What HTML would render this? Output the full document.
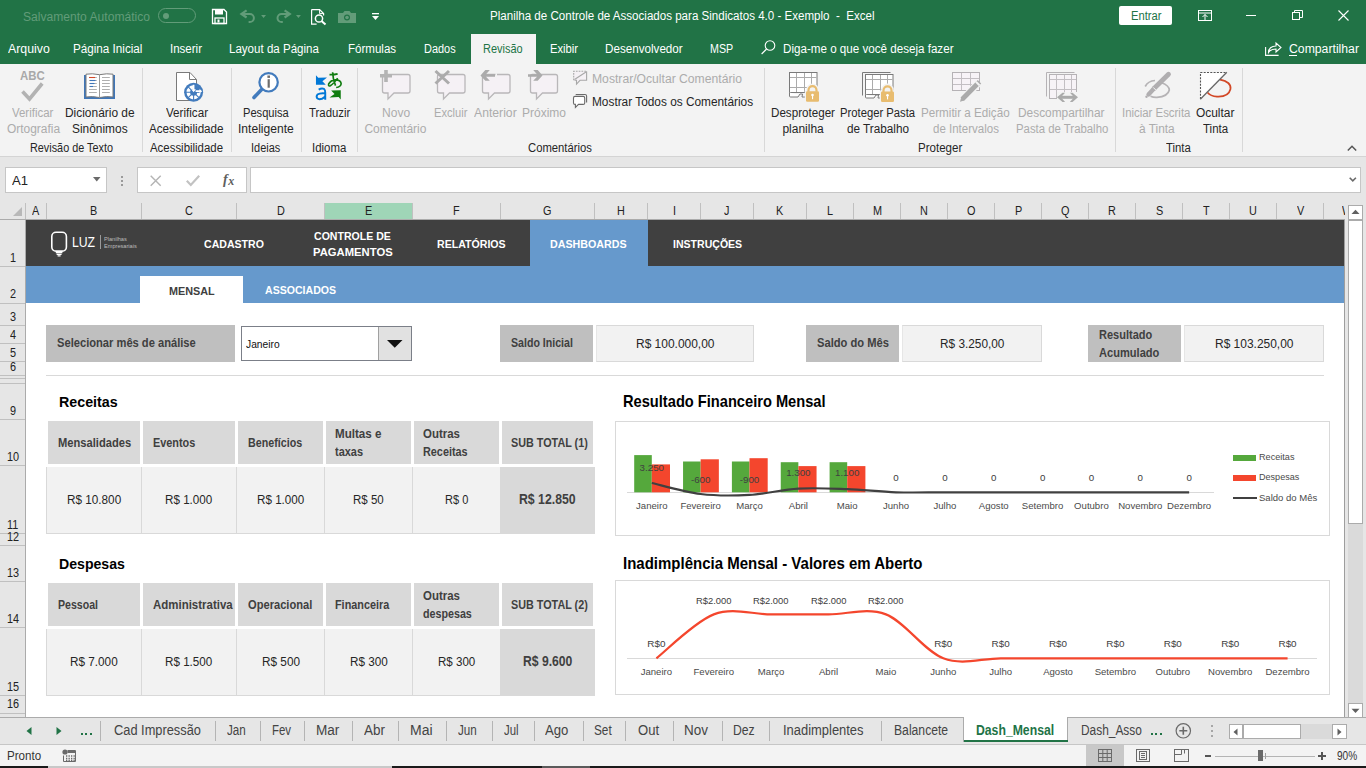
<!DOCTYPE html>
<html><head><meta charset="utf-8"><style>
html,body{margin:0;padding:0;width:1366px;height:768px;overflow:hidden;background:#ffffff;}
body{position:relative;font-family:"Liberation Sans",sans-serif;}
div{position:absolute;}
.t{white-space:nowrap;line-height:1;transform-origin:0 0;}
svg{overflow:visible;}
</style></head><body>
<div style="left:0px;top:0px;width:1366px;height:64px;background:#217346;"></div>
<div class="t" style="left:23.40px;top:11.00px;font-size:12.00px;color:#629c79;transform:scaleX(1.0073);">Salvamento Automático</div>
<div style="left:158px;top:8px;width:38px;height:15px;background:transparent;border:1px solid #629c79;border-radius:8px;box-sizing:border-box;"></div>
<div style="left:163px;top:13px;width:6px;height:6px;background:#629c79;border-radius:50%;"></div>
<div class="t" style="left:490.20px;top:10.00px;font-size:12.00px;color:#ffffff;transform:scaleX(0.9639);white-space:pre;">Planilha de Controle de Associados para Sindicatos 4.0 - Exemplo  -  Excel</div>
<div style="left:1119px;top:6px;width:53px;height:19px;background:#ffffff;border-radius:2px;"></div>
<div class="t" style="left:1130.60px;top:10.00px;font-size:12.00px;color:#217346;transform:scaleX(0.9303);">Entrar</div>
<svg style="position:absolute;left:212px;top:9px;" width="15" height="15" viewBox="0 0 15 15"><path d="M0.5 0.5h11.5l2.5 2.5v11.5h-14z" fill="none" stroke="#ffffff" stroke-width="1.3"/><rect x="3" y="0.5" width="8" height="5" fill="#ffffff"/><rect x="3" y="9" width="9" height="5.5" fill="none" stroke="#ffffff" stroke-width="1.3"/><rect x="5.5" y="10.5" width="2" height="3" fill="#ffffff"/></svg>
<svg style="position:absolute;left:236px;top:6px;" width="70" height="22" viewBox="0 0 70 22"><path d="M5.6 7.9H13.8A4.1 4.1 0 0 1 13.8 16.1H12.6" fill="none" stroke="#629c79" stroke-width="2"/><path d="M10.6 4.3L5.4 7.9L10.6 11.5" fill="none" stroke="#629c79" stroke-width="2.2"/><path d="M25.1 9.1h4.9l-2.45 2.9z" fill="#629c79"/><path d="M53.6 7.9H45.6A4.1 4.1 0 0 0 45.6 16.1H46.8" fill="none" stroke="#629c79" stroke-width="2"/><path d="M48.6 4.3L53.8 7.9L48.6 11.5" fill="none" stroke="#629c79" stroke-width="2.2"/><path d="M60 9.1h4.9l-2.45 2.9z" fill="#629c79"/></svg>
<svg style="position:absolute;left:311px;top:9px;" width="16" height="16" viewBox="0 0 16 16"><path d="M0.6 0.6h8l4 4v2M0.6 0.6v14.5h5" fill="none" stroke="#ffffff" stroke-width="1.2"/><path d="M8.6 0.6v4h4" fill="none" stroke="#ffffff" stroke-width="1"/><circle cx="8" cy="9.5" r="3.6" fill="none" stroke="#ffffff" stroke-width="1.5"/><path d="M10.5 12l4 3.5" stroke="#ffffff" stroke-width="2"/></svg>
<svg style="position:absolute;left:338px;top:11px;" width="18" height="12" viewBox="0 0 18 12"><path d="M0 2h5l1.5-2h5l1.5 2h5v10h-18z" fill="#629c79"/><circle cx="9" cy="6.5" r="3" fill="#217346"/><circle cx="9" cy="6.5" r="1.8" fill="#629c79"/></svg>
<svg style="position:absolute;left:372px;top:13px;" width="7" height="8" viewBox="0 0 7 8"><rect x="0" y="0" width="7" height="1.3" fill="#ffffff"/><path d="M0 3h7l-3.5 4z" fill="#ffffff"/></svg>
<svg style="position:absolute;left:1198px;top:10px;" width="14" height="11" viewBox="0 0 14 11"><rect x="0.5" y="0.5" width="13" height="10" fill="none" stroke="#ffffff" stroke-width="1"/><path d="M0.5 3h13" stroke="#ffffff"/><path d="M7 10V4.5M4.5 7l2.5-2.5 2.5 2.5" fill="none" stroke="#ffffff"/></svg>
<div style="left:1246px;top:15px;width:10px;height:1px;background:#ffffff;"></div>
<svg style="position:absolute;left:1292px;top:10px;" width="11" height="10" viewBox="0 0 11 10"><rect x="0.5" y="2.5" width="7" height="7" fill="none" stroke="#ffffff"/><path d="M2.5 2.5V0.5h8v7h-3" fill="none" stroke="#ffffff"/></svg>
<svg style="position:absolute;left:1338px;top:10px;" width="11" height="11" viewBox="0 0 11 11"><path d="M0.5 0.5l10 10M10.5 0.5l-10 10" stroke="#ffffff" stroke-width="1.1"/></svg>
<div class="t" style="left:8.00px;top:43.00px;font-size:12.00px;color:#ffffff;transform:scaleX(1.0273);">Arquivo</div>
<div class="t" style="left:73.40px;top:43.00px;font-size:12.00px;color:#ffffff;transform:scaleX(0.9722);">Página Inicial</div>
<div class="t" style="left:170.00px;top:43.00px;font-size:12.00px;color:#ffffff;transform:scaleX(0.9598);">Inserir</div>
<div class="t" style="left:229.30px;top:43.00px;font-size:12.00px;color:#ffffff;transform:scaleX(0.9624);">Layout da Página</div>
<div class="t" style="left:347.50px;top:43.00px;font-size:12.00px;color:#ffffff;transform:scaleX(0.9618);">Fórmulas</div>
<div class="t" style="left:423.60px;top:43.00px;font-size:12.00px;color:#ffffff;transform:scaleX(0.9110);">Dados</div>
<div style="left:471px;top:34px;width:65px;height:30px;background:#f3f3f3;"></div>
<div class="t" style="left:483.00px;top:43.00px;font-size:12.00px;color:#217346;transform:scaleX(0.9134);">Revisão</div>
<div class="t" style="left:550.00px;top:43.00px;font-size:12.00px;color:#ffffff;transform:scaleX(0.9331);">Exibir</div>
<div class="t" style="left:605.20px;top:43.00px;font-size:12.00px;color:#ffffff;transform:scaleX(0.9707);">Desenvolvedor</div>
<div class="t" style="left:710.30px;top:43.00px;font-size:12.00px;color:#ffffff;transform:scaleX(0.8921);">MSP</div>
<svg style="position:absolute;left:761px;top:40px;" width="15" height="15" viewBox="0 0 15 15"><circle cx="9" cy="5.5" r="4.8" fill="none" stroke="#ffffff" stroke-width="1.1"/><path d="M5.6 9L0.6 14" stroke="#ffffff" stroke-width="1.2"/></svg>
<div class="t" style="left:783.40px;top:43.00px;font-size:12.00px;color:#ffffff;transform:scaleX(0.9682);">Diga-me o que você deseja fazer</div>
<svg style="position:absolute;left:1265px;top:41px;" width="17" height="15" viewBox="0 0 17 15"><path d="M0.6 6v8.4h13" fill="none" stroke="#ffffff" stroke-width="1.1"/><path d="M3.5 11.5c0-4 3-6.5 7.5-6.5V2l5 4.5-5 4.5V8c-3.5 0-6 1-7.5 3.5z" fill="none" stroke="#ffffff" stroke-width="1.1"/></svg>
<div class="t" style="left:1289.00px;top:43.00px;font-size:12.00px;color:#ffffff;transform:scaleX(1.0190);">Compartilhar</div>
<div style="left:1289px;top:55px;width:8px;height:1px;background:#ffffff;"></div>
<div style="left:0px;top:64px;width:1366px;height:92px;background:#f3f3f3;"></div>
<div style="left:0px;top:156px;width:1366px;height:1px;background:#d4d4d4;"></div>
<div style="left:142px;top:68px;width:1px;height:84px;background:#d8d8d8;"></div>
<div style="left:231px;top:68px;width:1px;height:84px;background:#d8d8d8;"></div>
<div style="left:301px;top:68px;width:1px;height:84px;background:#d8d8d8;"></div>
<div style="left:357px;top:68px;width:1px;height:84px;background:#d8d8d8;"></div>
<div style="left:764px;top:68px;width:1px;height:84px;background:#d8d8d8;"></div>
<div style="left:1115px;top:68px;width:1px;height:84px;background:#d8d8d8;"></div>
<div style="left:1242px;top:68px;width:1px;height:84px;background:#d8d8d8;"></div>
<div class="t" style="left:29.50px;top:142.00px;font-size:12.00px;color:#262626;transform:scaleX(0.9038);">Revisão de Texto</div>
<div class="t" style="left:150.00px;top:142.00px;font-size:12.00px;color:#262626;transform:scaleX(0.9516);">Acessibilidade</div>
<div class="t" style="left:251.40px;top:142.00px;font-size:12.00px;color:#262626;transform:scaleX(0.9119);">Ideias</div>
<div class="t" style="left:312.20px;top:142.00px;font-size:12.00px;color:#262626;transform:scaleX(0.9523);">Idioma</div>
<div class="t" style="left:528.40px;top:142.00px;font-size:12.00px;color:#262626;transform:scaleX(0.9393);">Comentários</div>
<div class="t" style="left:918.10px;top:142.00px;font-size:12.00px;color:#262626;transform:scaleX(0.9625);">Proteger</div>
<div class="t" style="left:1165.80px;top:142.00px;font-size:12.00px;color:#262626;transform:scaleX(0.9454);">Tinta</div>
<svg style="position:absolute;left:1347px;top:145px;" width="10" height="6" viewBox="0 0 10 6"><path d="M0.8 5.5L5 1.3l4.2 4.2" fill="none" stroke="#555" stroke-width="1.5"/></svg>
<div class="t" style="left:12.30px;top:107.00px;font-size:12.00px;color:#acacac;transform:scaleX(0.9527);">Verificar</div>
<div class="t" style="left:6.70px;top:123.00px;font-size:12.00px;color:#acacac;transform:scaleX(0.9952);">Ortografia</div>
<div class="t" style="left:65.40px;top:107.00px;font-size:12.00px;color:#262626;transform:scaleX(0.9937);">Dicionário de</div>
<div class="t" style="left:72.40px;top:123.00px;font-size:12.00px;color:#262626;transform:scaleX(0.9923);">Sinônimos</div>
<div class="t" style="left:166.00px;top:107.00px;font-size:12.00px;color:#262626;transform:scaleX(0.9689);">Verificar</div>
<div class="t" style="left:149.40px;top:123.00px;font-size:12.00px;color:#262626;transform:scaleX(0.9724);">Acessibilidade</div>
<div class="t" style="left:243.20px;top:107.00px;font-size:12.00px;color:#262626;transform:scaleX(0.9257);">Pesquisa</div>
<div class="t" style="left:238.40px;top:123.00px;font-size:12.00px;color:#262626;transform:scaleX(1.0058);">Inteligente</div>
<div class="t" style="left:308.70px;top:107.00px;font-size:12.00px;color:#262626;transform:scaleX(0.9480);">Traduzir</div>
<div class="t" style="left:381.50px;top:107.00px;font-size:12.00px;color:#acacac;transform:scaleX(1.0031);">Novo</div>
<div class="t" style="left:364.40px;top:123.00px;font-size:12.00px;color:#acacac;">Comentário</div>
<div class="t" style="left:434.20px;top:107.00px;font-size:12.00px;color:#acacac;transform:scaleX(0.9276);">Excluir</div>
<div class="t" style="left:474.00px;top:107.00px;font-size:12.00px;color:#acacac;transform:scaleX(1.0162);">Anterior</div>
<div class="t" style="left:522.00px;top:107.00px;font-size:12.00px;color:#acacac;">Próximo</div>
<div class="t" style="left:591.60px;top:73.00px;font-size:12.00px;color:#acacac;transform:scaleX(1.0125);">Mostrar/Ocultar Comentário</div>
<div class="t" style="left:591.60px;top:96.00px;font-size:12.00px;color:#262626;transform:scaleX(0.9872);">Mostrar Todos os Comentários</div>
<div class="t" style="left:771.00px;top:107.00px;font-size:12.00px;color:#262626;transform:scaleX(0.9691);">Desproteger</div>
<div class="t" style="left:782.40px;top:123.00px;font-size:12.00px;color:#262626;">planilha</div>
<div class="t" style="left:840.40px;top:107.00px;font-size:12.00px;color:#262626;transform:scaleX(0.9382);">Proteger Pasta</div>
<div class="t" style="left:847.00px;top:123.00px;font-size:12.00px;color:#262626;transform:scaleX(0.9782);">de Trabalho</div>
<div class="t" style="left:921.30px;top:107.00px;font-size:12.00px;color:#acacac;transform:scaleX(0.9697);">Permitir a Edição</div>
<div class="t" style="left:932.60px;top:123.00px;font-size:12.00px;color:#acacac;transform:scaleX(0.9591);">de Intervalos</div>
<div class="t" style="left:1018.30px;top:107.00px;font-size:12.00px;color:#acacac;transform:scaleX(0.9901);">Descompartilhar</div>
<div class="t" style="left:1015.70px;top:123.00px;font-size:12.00px;color:#acacac;transform:scaleX(0.9476);">Pasta de Trabalho</div>
<div class="t" style="left:1122.20px;top:107.00px;font-size:12.00px;color:#acacac;transform:scaleX(0.9497);">Iniciar Escrita</div>
<div class="t" style="left:1139.00px;top:123.00px;font-size:12.00px;color:#acacac;transform:scaleX(0.9910);">à Tinta</div>
<div class="t" style="left:1196.20px;top:107.00px;font-size:12.00px;color:#262626;transform:scaleX(0.9928);">Ocultar</div>
<div class="t" style="left:1203.30px;top:123.00px;font-size:12.00px;color:#262626;transform:scaleX(0.9568);">Tinta</div>
<div class="t" style="left:20.40px;top:69.00px;font-size:13.23px;color:#a8a8a8;font-weight:bold;transform:scaleX(0.8619);">ABC</div>
<svg style="position:absolute;left:15px;top:66px;" width="40" height="40" viewBox="0 0 40 40"><path d="M7.5 25.5L14.5 33L27.2 17.5" fill="none" stroke="#b2b2b2" stroke-width="3.6" stroke-linejoin="miter"/></svg>
<svg style="position:absolute;left:84px;top:73px;" width="31" height="27" viewBox="0 0 31 27"><rect x="0" y="2" width="31" height="24" fill="#3f76b8"/><path d="M2 1.2Q8 0.2 15.5 1.7Q23 0.2 29 1.2V24Q23 23 15.5 24.5Q8 23 2 24z" fill="#ffffff" stroke="#7a7a7a" stroke-width="1"/><path d="M15.5 1.7V24.5" stroke="#9a9a9a" stroke-width="1"/><path d="M5 4.5h7.8M18 4.5h7.8" stroke="#a6a6a6" stroke-width="0.9"/><path d="M5 7.5h7.8M18 7.5h7.8" stroke="#a6a6a6" stroke-width="0.9"/><path d="M5 10.5h7.8M18 10.5h7.8" stroke="#a6a6a6" stroke-width="0.9"/><path d="M5 13.5h7.8M18 13.5h7.8" stroke="#a6a6a6" stroke-width="0.9"/><path d="M5 16.5h7.8M18 16.5h7.8" stroke="#a6a6a6" stroke-width="0.9"/><path d="M5 19.5h7.8M18 19.5h7.8" stroke="#a6a6a6" stroke-width="0.9"/><path d="M5 4.5h6" stroke="#d24726" stroke-width="1.1"/><path d="M6 7.5h5.5" stroke="#3f76b8" stroke-width="1.1"/><path d="M6 10.5h4.5" stroke="#3f76b8" stroke-width="1.1"/><path d="M6 13.5h3" stroke="#3f76b8" stroke-width="1.1"/></svg>
<svg style="position:absolute;left:176px;top:72px;" width="30" height="31" viewBox="0 0 30 31"><path d="M0.5 0.5h13.5l6.5 7v21h-20z" fill="#ffffff" stroke="#7a7a7a" stroke-width="1"/><path d="M13.5 0.5v7h7" fill="none" stroke="#7a7a7a" stroke-width="1"/><circle cx="17.6" cy="20.3" r="9.5" fill="#427bbd"/><circle cx="17.6" cy="20.3" r="5.3" fill="none" stroke="#ffffff" stroke-width="3.6"/><path d="M17.6 20.3L25.20 20.30M17.6 20.3L22.97 25.67M17.6 20.3L17.60 27.90M17.6 20.3L12.23 25.67M17.6 20.3L10.00 20.30M17.6 20.3L12.23 14.93M17.6 20.3L17.60 12.70M17.6 20.3L22.97 14.93" stroke="#427bbd" stroke-width="1.1"/><path d="M17.6 20.3L17.6 12.700000000000001A7.6 7.6 0 0 1 25.200000000000003 20.3z" fill="#427bbd"/><path d="M17.6 12.700000000000001V18.7M19.6 19.2H24.400000000000002" stroke="#ffffff" stroke-width="1.7"/><path d="M15.3 17.2H19.900000000000002L17.6 20.3zM23.5 16.900000000000002V21.5L26.200000000000003 19.2z" fill="#ffffff"/></svg>
<svg style="position:absolute;left:251px;top:72px;" width="30" height="30" viewBox="0 0 30 30"><circle cx="17.6" cy="10.3" r="9.2" fill="#ffffff" stroke="#427bbd" stroke-width="2.2"/><path d="M10.6 17.6L3 25.5" stroke="#427bbd" stroke-width="3.6" stroke-linecap="round"/><rect x="16.6" y="7.2" width="2.2" height="8.5" fill="#6e6e6e"/><rect x="16.4" y="3.5" width="2.6" height="2.4" fill="#6e6e6e"/></svg>
<svg style="position:absolute;left:312px;top:70px;" width="34" height="32" viewBox="0 0 34 32"><g transform="scale(0.041667)"><path d="M95 125L150 185L360 180L250 270L330 355L95 355z" fill="#0078d7"/><path d="M460 490L690 485L690 710L640 650L420 660L540 575z" fill="#107c10"/><path d="M160 470Q230 430 290 455Q318 475 318 540V715M318 560Q190 545 130 590Q95 630 125 680Q165 715 240 690Q300 665 318 620" fill="none" stroke="#0078d7" stroke-width="46"/><path d="M420 110Q520 118 615 92M495 55Q500 220 565 375M615 195Q520 330 440 378Q385 400 400 335Q450 245 560 238Q695 240 700 330Q690 405 580 420" fill="none" stroke="#107c10" stroke-width="40"/></g></svg>
<svg style="position:absolute;left:378px;top:68px;" width="34" height="34" viewBox="0 0 34 34"><path d="M6.5 6.5h23.5q2 0 2 2v14.5q0 2-2 2H16.0l-6 6v-6H6.5q-2 0-2-2v-14.5q0-2 2-2z" fill="#f5f1f5" stroke="#b9b7b9" stroke-width="1.3"/><path d="M2 7.7h12M8 2v12" stroke="#b4b4b4" stroke-width="3.6"/></svg>
<svg style="position:absolute;left:433px;top:68px;" width="34" height="34" viewBox="0 0 34 34"><path d="M6.5 6.5h23.5q2 0 2 2v14.5q0 2-2 2H16.5l-6 6v-6H6.5q-2 0-2-2v-14.5q0-2 2-2z" fill="#f5f1f5" stroke="#b9b7b9" stroke-width="1.3"/><path d="M2.5 3l13.5 12.5M16 3L2.5 15.5" stroke="#ababab" stroke-width="3"/></svg>
<svg style="position:absolute;left:479px;top:68px;" width="34" height="34" viewBox="0 0 34 34"><path d="M5.5 6.5h23.5q2 0 2 2v14.5q0 2-2 2H15.5l-6 6v-6H5.5q-2 0-2-2v-14.5q0-2 2-2z" fill="#f5f1f5" stroke="#b9b7b9" stroke-width="1.3"/><path d="M16.5 5.2h1.5v5h-1.5z" fill="#f3f3f3"/><path d="M1.5 7.4L6.3 2.1H10.8L7 6.2H16V8.8H7L10.8 12.8H6.3z" fill="#ababab"/></svg>
<svg style="position:absolute;left:527px;top:68px;" width="34" height="34" viewBox="0 0 34 34"><path d="M5.5 6.5h23q2 0 2 2v14.5q0 2-2 2H15.5l-6 6v-6H5.5q-2 0-2-2v-14.5q0-2 2-2z" fill="#f5f1f5" stroke="#b9b7b9" stroke-width="1.3"/><path d="M15.5 7.4L10.7 2.1H6.2L10 6.2H1V8.8H10L6.2 12.8H10.7z" fill="#ababab"/></svg>
<svg style="position:absolute;left:572px;top:70px;" width="16" height="16" viewBox="0 0 16 16"><path d="M1.7 1.3H14.6V10.3H8L4.5 14.1V10.3H1.7z" fill="#f5f1f5"/><path d="M1.7 10.3V1.3H14.6" fill="none" stroke="#a8a8a8" stroke-width="1.1" stroke-dasharray="1.7 1.1"/><path d="M14.6 1.3V10.3H8L4.5 14.1V10.3H2.5" fill="none" stroke="#a8a8a8" stroke-width="1.1"/><path d="M2.5 9.5L14 2" stroke="#a8a8a8" stroke-width="1.1"/></svg>
<svg style="position:absolute;left:572px;top:93px;" width="16" height="16" viewBox="0 0 16 16"><path d="M3.7 1.5H13Q14.6 1.5 14.6 3.1V9.4" fill="none" stroke="#6a6a6a" stroke-width="1.1"/><path d="M3 3.4H11.2Q12.7 3.4 12.7 4.9V9.9Q12.7 11.4 11.2 11.4H6.5L3.4 14.4V11.4H3Q1.5 11.4 1.5 9.9V4.9Q1.5 3.4 3 3.4z" fill="#ffffff" stroke="#6a6a6a" stroke-width="1.1"/></svg>
<svg style="position:absolute;left:789px;top:72px;" width="32" height="32" viewBox="0 0 32 32"><rect x="0.5" y="0.5" width="27.5" height="20" fill="#ffffff" stroke="#7a7a7a" stroke-width="1"/><path d="M7.5 1V20" stroke="#ababab" stroke-width="1"/><path d="M15.5 1V20" stroke="#ababab" stroke-width="1"/><path d="M22.5 1V20" stroke="#ababab" stroke-width="1"/><path d="M1 5.5H27.5" stroke="#ababab" stroke-width="1"/><path d="M1 15.5H27.5" stroke="#ababab" stroke-width="1"/><path d="M0.5 20.5v3.5q0 1 1 1H9l2-3h2.5l-0.5 3h6" fill="#fff" stroke="#7a7a7a" stroke-width="1"/><path d="M15.8 30.7V18.4H17.2V17.7A6.3 6.3 0 0 1 29.8 17.7V18.4H31.2V30.7z" fill="#f3f3f3"/><path d="M19.5 19.7v-1.5a4 4 0 0 1 8 0v1.5" fill="none" stroke="#e8bc6f" stroke-width="2.2"/><rect x="17" y="19.2" width="13" height="10.5" rx="1.2" fill="#e8bc6f"/><circle cx="23.5" cy="23.0" r="1.3" fill="#ffffff"/><rect x="23" y="23.2" width="1.1" height="4" fill="#ffffff"/></svg>
<svg style="position:absolute;left:862px;top:72px;" width="34" height="32" viewBox="0 0 34 32"><path d="M0.5 23.5V0.5H28.5" fill="none" stroke="#7a7a7a" stroke-width="1"/><rect x="3.5" y="2.5" width="27.5" height="20" fill="#ffffff" stroke="#7a7a7a" stroke-width="1"/><path d="M10.5 3V22" stroke="#ababab" stroke-width="1"/><path d="M18.5 3V22" stroke="#ababab" stroke-width="1"/><path d="M25.5 3V22" stroke="#ababab" stroke-width="1"/><path d="M4 7.5H30.5" stroke="#ababab" stroke-width="1"/><path d="M4 17.5H30.5" stroke="#ababab" stroke-width="1"/><path d="M3.5 22.5v2.5q0 1 1 1H12l2-3h2.5l-0.5 3h3" fill="#fff" stroke="#7a7a7a" stroke-width="1"/><path d="M17.8 30.9V18.6H19.2V17.9A6.3 6.3 0 0 1 31.8 17.9V18.6H33.2V30.9z" fill="#f3f3f3"/><path d="M21.5 19.9v-1.5a4 4 0 0 1 8 0v1.5" fill="none" stroke="#e8bc6f" stroke-width="2.2"/><rect x="19" y="19.4" width="13" height="10.5" rx="1.2" fill="#e8bc6f"/><circle cx="25.5" cy="23.200000000000003" r="1.3" fill="#ffffff"/><rect x="25" y="23.4" width="1.1" height="4" fill="#ffffff"/></svg>
<svg style="position:absolute;left:952px;top:72px;" width="32" height="32" viewBox="0 0 32 32"><rect x="0.5" y="0.5" width="27" height="18" fill="#f7f3f7" stroke="#b5b2b5" stroke-width="1"/><path d="M9.5 1V18" stroke="#c3bfc3" stroke-width="1"/><path d="M18.5 1V18" stroke="#c3bfc3" stroke-width="1"/><path d="M1 6.5H27" stroke="#c3bfc3" stroke-width="1"/><path d="M1 12.5H27" stroke="#c3bfc3" stroke-width="1"/><path d="M9.5 28.5L27 10.5" stroke="#f3f3f3" stroke-width="7.5"/><path d="M10.2 27.3L27.5 9.7" stroke="#aaaaaa" stroke-width="4.8"/><path d="M25 12.2l1.4-1.4" stroke="#f3f3f3" stroke-width="5"/><path d="M8 29.7l1.2-4.2 3 3z" fill="#aaaaaa"/></svg>
<svg style="position:absolute;left:1046px;top:72px;" width="34" height="32" viewBox="0 0 34 32"><path d="M0.5 24.5V0.5H28.5" fill="none" stroke="#b5b2b5" stroke-width="1"/><rect x="3.5" y="2.5" width="27" height="24" fill="#f7f3f7" stroke="#b5b2b5" stroke-width="1"/><path d="M10.5 3V26" stroke="#c3bfc3" stroke-width="1"/><path d="M18.5 3V26" stroke="#c3bfc3" stroke-width="1"/><path d="M25.5 3V26" stroke="#c3bfc3" stroke-width="1"/><path d="M4 7.5H30" stroke="#c3bfc3" stroke-width="1"/><path d="M4 17.5H30" stroke="#c3bfc3" stroke-width="1"/><path d="M11 20h21v10H11z" fill="#f3f3f3"/><path d="M15 25.3h14" stroke="#aaaaaa" stroke-width="3"/><path d="M11 25.3l5.5-4.6h2.6l-4.2 4.6 4.2 4.6h-2.6zM32 25.3l-5.5-4.6h-2.6l4.2 4.6-4.2 4.6h2.6z" fill="#aaaaaa"/></svg>
<svg style="position:absolute;left:1144px;top:72px;" width="28" height="28" viewBox="0 0 28 28"><path d="M1.2 14.5Q4 9 11 8.5M17.5 10.8Q25 13.5 25.3 18Q24 24.5 13 25.3Q9.5 25.5 6.5 24.2" fill="none" stroke="#b5b3b5" stroke-width="1.7"/><path d="M24.5 2.2L10 16.5" stroke="#b0aeb0" stroke-width="4.8" stroke-linecap="round"/><path d="M10.5 16L4.5 22.5" stroke="#b0aeb0" stroke-width="4.3" stroke-linecap="round"/><path d="M9.2 15.4l3 3" stroke="#f3f3f3" stroke-width="1"/><circle cx="2.5" cy="24.8" r="1.2" fill="#b0aeb0"/></svg>
<svg style="position:absolute;left:1200px;top:72px;" width="32" height="29" viewBox="0 0 32 29"><path d="M0.5 0.5H26.5L0.5 27.2z" fill="#ffffff"/><path d="M0.5 27V0.5H26" fill="none" stroke="#555" stroke-width="1.1" stroke-dasharray="2 1.3"/><path d="M20 7.6Q31.5 10 30.5 17Q28.5 25.2 17 24.6Q10.5 24.2 7.5 20.5" fill="none" stroke="#d24726" stroke-width="1.7"/><path d="M26.8 0.3L0.3 27.3" stroke="#666" stroke-width="1.3"/></svg>
<div style="left:0px;top:157px;width:1366px;height:46px;background:#e6e6e6;"></div>
<div style="left:5px;top:167px;width:102px;height:26px;background:#ffffff;border:1px solid #c6c6c6;box-sizing:border-box;"></div>
<div class="t" style="left:11.50px;top:175.00px;font-size:12.00px;color:#222222;transform:scaleX(1.0900);">A1</div>
<svg style="position:absolute;left:93px;top:177px;" width="8" height="5" viewBox="0 0 8 5"><path d="M0 0h7.5L3.75 4.5z" fill="#6a6a6a"/></svg>
<div style="left:121px;top:176px;width:2px;height:2px;background:#9a9a9a;"></div>
<div style="left:121px;top:180px;width:2px;height:2px;background:#9a9a9a;"></div>
<div style="left:121px;top:184px;width:2px;height:2px;background:#9a9a9a;"></div>
<div style="left:137px;top:167px;width:110px;height:26px;background:#ffffff;border:1px solid #c6c6c6;box-sizing:border-box;"></div>
<svg style="position:absolute;left:150px;top:175px;" width="12" height="11" viewBox="0 0 12 11"><path d="M0.7 0.7l10 10M10.7 0.7l-10 10" stroke="#b4b4b4" stroke-width="1.4"/></svg>
<svg style="position:absolute;left:186px;top:175px;" width="14" height="11" viewBox="0 0 14 11"><path d="M0.8 5.8L4.8 10L13.2 0.8" fill="none" stroke="#c2c2c2" stroke-width="2.2"/></svg>
<div class="t" style="left:223px;top:173px;font-size:14px;font-family:'Liberation Serif',serif;font-style:italic;font-weight:bold;color:#5e5e5e;">f<span style="font-size:12px;position:relative;top:1px;left:0.5px;">x</span></div>
<div style="left:250px;top:167px;width:1111px;height:26px;background:#ffffff;border:1px solid #c6c6c6;box-sizing:border-box;"></div>
<svg style="position:absolute;left:1349px;top:177px;" width="8" height="5" viewBox="0 0 8 5"><path d="M0.7 0.7L3.8 3.8 6.9 0.7" fill="none" stroke="#6a6a6a" stroke-width="1.6"/></svg>
<div style="left:0px;top:203px;width:1345px;height:17px;background:#e6e6e6;"></div>
<div style="left:0px;top:219px;width:1345px;height:1px;background:#ababab;"></div>
<svg style="position:absolute;left:13px;top:207px;" width="10" height="10" viewBox="0 0 10 10"><path d="M9 0V9H0z" fill="#b8b8b8"/></svg>
<div style="left:325px;top:203px;width:88px;height:16px;background:#9fd5b7;"></div>
<div style="left:324px;top:203px;width:1px;height:16px;background:#a8a8a8;"></div>
<div style="left:412px;top:203px;width:1px;height:16px;background:#a8a8a8;"></div>
<div style="left:25px;top:203px;width:1px;height:16px;background:#c0c0c0;"></div>
<div class="t" style="left:32.07px;top:205.00px;font-size:12.79px;color:#222222;transform:scaleX(0.8506);">A</div>
<div style="left:46px;top:203px;width:1px;height:16px;background:#c0c0c0;"></div>
<div class="t" style="left:90.32px;top:205.00px;font-size:12.79px;color:#222222;transform:scaleX(0.8506);">B</div>
<div style="left:141px;top:203px;width:1px;height:16px;background:#c0c0c0;"></div>
<div class="t" style="left:185.17px;top:205.00px;font-size:12.79px;color:#222222;transform:scaleX(0.8506);">C</div>
<div style="left:236px;top:203px;width:1px;height:16px;background:#c0c0c0;"></div>
<div class="t" style="left:276.67px;top:205.00px;font-size:12.79px;color:#222222;transform:scaleX(0.8506);">D</div>
<div style="left:324px;top:203px;width:1px;height:16px;background:#c0c0c0;"></div>
<div class="t" style="left:364.97px;top:205.00px;font-size:12.79px;color:#222222;transform:scaleX(0.8506);">E</div>
<div style="left:412px;top:203px;width:1px;height:16px;background:#c0c0c0;"></div>
<div class="t" style="left:453.03px;top:205.00px;font-size:12.79px;color:#222222;transform:scaleX(0.8506);">F</div>
<div style="left:500px;top:203px;width:1px;height:16px;background:#c0c0c0;"></div>
<div class="t" style="left:543.12px;top:205.00px;font-size:12.79px;color:#222222;transform:scaleX(0.8506);">G</div>
<div style="left:594px;top:203px;width:1px;height:16px;background:#c0c0c0;"></div>
<div class="t" style="left:617.32px;top:205.00px;font-size:12.79px;color:#222222;transform:scaleX(0.8506);">H</div>
<div style="left:647px;top:203px;width:1px;height:16px;background:#c0c0c0;"></div>
<div class="t" style="left:672.64px;top:205.00px;font-size:12.79px;color:#222222;transform:scaleX(0.8506);">I</div>
<div style="left:700px;top:203px;width:1px;height:16px;background:#c0c0c0;"></div>
<div class="t" style="left:724.28px;top:205.00px;font-size:12.79px;color:#222222;transform:scaleX(0.8506);">J</div>
<div style="left:753px;top:203px;width:1px;height:16px;background:#c0c0c0;"></div>
<div class="t" style="left:776.42px;top:205.00px;font-size:12.79px;color:#222222;transform:scaleX(0.8506);">K</div>
<div style="left:806px;top:203px;width:1px;height:16px;background:#c0c0c0;"></div>
<div class="t" style="left:827.02px;top:205.00px;font-size:12.79px;color:#222222;transform:scaleX(0.8506);">L</div>
<div style="left:853px;top:203px;width:1px;height:16px;background:#c0c0c0;"></div>
<div class="t" style="left:872.57px;top:205.00px;font-size:12.79px;color:#222222;transform:scaleX(0.8506);">M</div>
<div style="left:900px;top:203px;width:1px;height:16px;background:#c0c0c0;"></div>
<div class="t" style="left:920.32px;top:205.00px;font-size:12.79px;color:#222222;transform:scaleX(0.8506);">N</div>
<div style="left:947px;top:203px;width:1px;height:16px;background:#c0c0c0;"></div>
<div class="t" style="left:967.12px;top:205.00px;font-size:12.79px;color:#222222;transform:scaleX(0.8506);">O</div>
<div style="left:994px;top:203px;width:1px;height:16px;background:#c0c0c0;"></div>
<div class="t" style="left:1014.67px;top:205.00px;font-size:12.79px;color:#222222;transform:scaleX(0.8506);">P</div>
<div style="left:1041px;top:203px;width:1px;height:16px;background:#c0c0c0;"></div>
<div class="t" style="left:1060.97px;top:205.00px;font-size:12.79px;color:#222222;transform:scaleX(0.8506);">Q</div>
<div style="left:1088px;top:203px;width:1px;height:16px;background:#c0c0c0;"></div>
<div class="t" style="left:1108.32px;top:205.00px;font-size:12.79px;color:#222222;transform:scaleX(0.8506);">R</div>
<div style="left:1135px;top:203px;width:1px;height:16px;background:#c0c0c0;"></div>
<div class="t" style="left:1155.57px;top:205.00px;font-size:12.79px;color:#222222;transform:scaleX(0.8506);">S</div>
<div style="left:1182px;top:203px;width:1px;height:16px;background:#c0c0c0;"></div>
<div class="t" style="left:1202.83px;top:205.00px;font-size:12.79px;color:#222222;transform:scaleX(0.8506);">T</div>
<div style="left:1229px;top:203px;width:1px;height:16px;background:#c0c0c0;"></div>
<div class="t" style="left:1249.32px;top:205.00px;font-size:12.79px;color:#222222;transform:scaleX(0.8506);">U</div>
<div style="left:1276px;top:203px;width:1px;height:16px;background:#c0c0c0;"></div>
<div class="t" style="left:1296.52px;top:205.00px;font-size:12.79px;color:#222222;transform:scaleX(0.8506);">V</div>
<div style="left:1323px;top:203px;width:1px;height:16px;background:#c0c0c0;"></div>
<div class="t" style="left:1341.62px;top:205.00px;font-size:12.79px;color:#222222;transform:scaleX(0.8506);">W</div>
<div style="left:1345px;top:203px;width:21px;height:17px;background:#e6e6e6;"></div>
<div style="left:0px;top:220px;width:25px;height:498px;background:#e6e6e6;"></div>
<div style="left:25px;top:220px;width:1px;height:498px;background:#ababab;"></div>
<div style="left:0px;top:266px;width:25px;height:1px;background:#c0c0c0;"></div>
<div class="t" style="left:9.97px;top:252.00px;font-size:12.79px;color:#222222;transform:scaleX(0.8506);">1</div>
<div style="left:0px;top:303px;width:25px;height:1px;background:#c0c0c0;"></div>
<div class="t" style="left:9.97px;top:288.00px;font-size:12.79px;color:#222222;transform:scaleX(0.8506);">2</div>
<div style="left:0px;top:325px;width:25px;height:1px;background:#c0c0c0;"></div>
<div class="t" style="left:9.97px;top:311.00px;font-size:12.79px;color:#222222;transform:scaleX(0.8506);">3</div>
<div style="left:0px;top:343px;width:25px;height:1px;background:#c0c0c0;"></div>
<div class="t" style="left:9.97px;top:329.00px;font-size:12.79px;color:#222222;transform:scaleX(0.8506);">4</div>
<div style="left:0px;top:361px;width:25px;height:1px;background:#c0c0c0;"></div>
<div class="t" style="left:9.97px;top:347.00px;font-size:12.79px;color:#222222;transform:scaleX(0.8506);">5</div>
<div style="left:0px;top:375px;width:25px;height:1px;background:#c0c0c0;"></div>
<div class="t" style="left:9.97px;top:361.00px;font-size:12.79px;color:#222222;transform:scaleX(0.8506);">6</div>
<div style="left:0px;top:378px;width:25px;height:1px;background:#c0c0c0;"></div>
<div style="left:0px;top:383px;width:25px;height:1px;background:#c0c0c0;"></div>
<div style="left:0px;top:419px;width:25px;height:1px;background:#c0c0c0;"></div>
<div class="t" style="left:9.97px;top:405.00px;font-size:12.79px;color:#222222;transform:scaleX(0.8506);">9</div>
<div style="left:0px;top:465px;width:25px;height:1px;background:#c0c0c0;"></div>
<div class="t" style="left:6.95px;top:451.00px;font-size:12.79px;color:#222222;transform:scaleX(0.8506);">10</div>
<div style="left:0px;top:533px;width:25px;height:1px;background:#c0c0c0;"></div>
<div class="t" style="left:7.35px;top:519.00px;font-size:12.79px;color:#222222;transform:scaleX(0.8506);">11</div>
<div style="left:0px;top:545px;width:25px;height:1px;background:#c0c0c0;"></div>
<div class="t" style="left:6.95px;top:531.00px;font-size:12.79px;color:#222222;transform:scaleX(0.8506);">12</div>
<div style="left:0px;top:581px;width:25px;height:1px;background:#c0c0c0;"></div>
<div class="t" style="left:6.95px;top:567.00px;font-size:12.79px;color:#222222;transform:scaleX(0.8506);">13</div>
<div style="left:0px;top:627px;width:25px;height:1px;background:#c0c0c0;"></div>
<div class="t" style="left:6.95px;top:613.00px;font-size:12.79px;color:#222222;transform:scaleX(0.8506);">14</div>
<div style="left:0px;top:695px;width:25px;height:1px;background:#c0c0c0;"></div>
<div class="t" style="left:6.95px;top:681.00px;font-size:12.79px;color:#222222;transform:scaleX(0.8506);">15</div>
<div style="left:0px;top:713px;width:25px;height:1px;background:#c0c0c0;"></div>
<div class="t" style="left:6.95px;top:698.00px;font-size:12.79px;color:#222222;transform:scaleX(0.8506);">16</div>
<div style="left:0px;top:730px;width:25px;height:1px;background:#c0c0c0;"></div>
<div style="left:26px;top:220px;width:1318px;height:497px;background:#ffffff;"></div>
<div style="left:1344px;top:220px;width:1px;height:498px;background:#9e9e9e;"></div>
<div style="left:1345px;top:203px;width:21px;height:515px;background:#e6e6e6;"></div>
<div style="left:26px;top:220px;width:1318px;height:46px;background:#404040;"></div>
<div style="left:26px;top:266px;width:1318px;height:37px;background:#6699cc;"></div>
<div style="left:530px;top:220px;width:118px;height:46px;background:#6699cc;"></div>
<svg style="position:absolute;left:50px;top:230px;" width="20" height="28" viewBox="0 0 20 28"><rect x="1.8" y="2.3" width="14.6" height="18.8" rx="4.2" fill="none" stroke="#ffffff" stroke-width="1.6"/><path d="M5.8 22.6h6.6M6.6 24.3h5M7.6 25.8h3" stroke="#ffffff" stroke-width="1.2"/></svg>
<div class="t" style="left:71.70px;top:235.00px;font-size:14.24px;color:#ffffff;transform:scaleX(0.8584);">LUZ</div>
<div style="left:99.5px;top:235px;width:1px;height:14px;background:#9a9a9a;"></div>
<div class="t" style="left:104.20px;top:236.00px;font-size:6.25px;color:#bdbdbd;transform:scaleX(0.8989);">Planilhas</div>
<div class="t" style="left:104.20px;top:243.00px;font-size:6.25px;color:#bdbdbd;transform:scaleX(0.8994);">Empresariais</div>
<div class="t" style="left:204.00px;top:238.00px;font-size:11.77px;color:#ffffff;font-weight:bold;transform:scaleX(0.8979);">CADASTRO</div>
<div class="t" style="left:313.70px;top:230.00px;font-size:11.77px;color:#ffffff;font-weight:bold;transform:scaleX(0.8975);">CONTROLE DE</div>
<div class="t" style="left:312.60px;top:246.00px;font-size:11.77px;color:#ffffff;font-weight:bold;transform:scaleX(0.9568);">PAGAMENTOS</div>
<div class="t" style="left:436.70px;top:238.00px;font-size:11.77px;color:#ffffff;font-weight:bold;transform:scaleX(0.9003);">RELATÓRIOS</div>
<div class="t" style="left:550.30px;top:238.00px;font-size:11.77px;color:#ffffff;font-weight:bold;transform:scaleX(0.9090);">DASHBOARDS</div>
<div class="t" style="left:672.60px;top:238.00px;font-size:11.77px;color:#ffffff;font-weight:bold;transform:scaleX(0.8965);">INSTRUÇÕES</div>
<div style="left:140px;top:276px;width:103px;height:27px;background:#ffffff;"></div>
<div class="t" style="left:168.80px;top:285.00px;font-size:11.77px;color:#404040;font-weight:bold;transform:scaleX(0.9193);">MENSAL</div>
<div class="t" style="left:265.00px;top:284.00px;font-size:11.77px;color:#ffffff;font-weight:bold;transform:scaleX(0.8982);">ASSOCIADOS</div>
<div style="left:46px;top:325px;width:189px;height:37px;background:#bfbfbf;"></div>
<div class="t" style="left:57.00px;top:336.00px;font-size:13.08px;color:#404040;font-weight:bold;transform:scaleX(0.8522);">Selecionar mês de análise</div>
<div style="left:241px;top:326px;width:171px;height:35px;background:#ffffff;border:1px solid #7b7f88;box-sizing:border-box;"></div>
<div style="left:378px;top:327px;width:33px;height:33px;background:#e1e1e1;border-left:1px solid #a0a0a0;box-sizing:border-box;"></div>
<svg style="position:absolute;left:387px;top:340px;" width="16" height="8" viewBox="0 0 16 8"><path d="M0 0h15.5L7.75 7.8z" fill="#111111"/></svg>
<div class="t" style="left:246.40px;top:339.00px;font-size:11.48px;color:#111111;transform:scaleX(0.8948);">Janeiro</div>
<div style="left:500px;top:325px;width:93px;height:37px;background:#bfbfbf;"></div>
<div class="t" style="left:511.00px;top:336.00px;font-size:13.08px;color:#404040;font-weight:bold;transform:scaleX(0.8110);">Saldo Inicial</div>
<div style="left:596px;top:325px;width:158px;height:37px;background:#f2f2f2;border:1px solid #d9d9d9;border-left-color:#e6e6e6;box-sizing:border-box;"></div>
<div class="t" style="left:635.75px;top:337.00px;font-size:13.08px;color:#262626;transform:scaleX(0.9146);">R$ 100.000,00</div>
<div style="left:806px;top:325px;width:93px;height:37px;background:#bfbfbf;"></div>
<div class="t" style="left:817.00px;top:336.00px;font-size:13.08px;color:#404040;font-weight:bold;transform:scaleX(0.8539);">Saldo do Mês</div>
<div style="left:902px;top:325px;width:140px;height:37px;background:#f2f2f2;border:1px solid #d9d9d9;border-left-color:#e6e6e6;box-sizing:border-box;"></div>
<div class="t" style="left:939.80px;top:337.00px;font-size:13.08px;color:#262626;transform:scaleX(0.9035);">R$ 3.250,00</div>
<div style="left:1088px;top:325px;width:93px;height:37px;background:#bfbfbf;"></div>
<div class="t" style="left:1099.20px;top:328.00px;font-size:13.08px;color:#404040;font-weight:bold;transform:scaleX(0.8413);">Resultado</div>
<div class="t" style="left:1099.20px;top:346.00px;font-size:13.08px;color:#404040;font-weight:bold;transform:scaleX(0.8480);">Acumulado</div>
<div style="left:1184px;top:325px;width:140px;height:37px;background:#f2f2f2;border:1px solid #d9d9d9;border-left-color:#e6e6e6;box-sizing:border-box;"></div>
<div class="t" style="left:1214.75px;top:337.00px;font-size:13.08px;color:#262626;transform:scaleX(0.9146);">R$ 103.250,00</div>
<div style="left:46px;top:375px;width:1278px;height:1px;background:#d9d9d9;"></div>
<div class="t" style="left:58.70px;top:394.00px;font-size:15.41px;color:#000000;font-weight:bold;transform:scaleX(0.9245);">Receitas</div>
<div style="left:48px;top:421px;width:92px;height:43px;background:#d9d9d9;"></div>
<div style="left:143px;top:421px;width:92px;height:43px;background:#d9d9d9;"></div>
<div style="left:238px;top:421px;width:85px;height:43px;background:#d9d9d9;"></div>
<div style="left:326px;top:421px;width:85px;height:43px;background:#d9d9d9;"></div>
<div style="left:414px;top:421px;width:85px;height:43px;background:#d9d9d9;"></div>
<div style="left:502px;top:421px;width:91px;height:43px;background:#d9d9d9;"></div>
<div class="t" style="left:57.60px;top:436.00px;font-size:13.08px;color:#404040;font-weight:bold;transform:scaleX(0.8521);">Mensalidades</div>
<div class="t" style="left:152.50px;top:436.00px;font-size:13.08px;color:#404040;font-weight:bold;transform:scaleX(0.8312);">Eventos</div>
<div class="t" style="left:247.60px;top:436.00px;font-size:13.08px;color:#404040;font-weight:bold;transform:scaleX(0.8193);">Benefícios</div>
<div class="t" style="left:335.30px;top:427.00px;font-size:13.08px;color:#404040;font-weight:bold;transform:scaleX(0.8884);">Multas e</div>
<div class="t" style="left:335.30px;top:445.00px;font-size:13.08px;color:#404040;font-weight:bold;transform:scaleX(0.8369);">taxas</div>
<div class="t" style="left:423.10px;top:427.00px;font-size:13.08px;color:#404040;font-weight:bold;transform:scaleX(0.8752);">Outras</div>
<div class="t" style="left:423.10px;top:445.00px;font-size:13.08px;color:#404040;font-weight:bold;transform:scaleX(0.8288);">Receitas</div>
<div class="t" style="left:511.00px;top:436.00px;font-size:13.08px;color:#404040;font-weight:bold;transform:scaleX(0.8255);">SUB TOTAL (1)</div>
<div style="left:46px;top:467px;width:455px;height:67px;background:#f2f2f2;border-left:1px solid #d9d9d9;border-bottom:1px solid #d9d9d9;box-sizing:border-box;"></div>
<div style="left:141px;top:467px;width:1px;height:66px;background:#d9d9d9;"></div>
<div style="left:236px;top:467px;width:1px;height:66px;background:#d9d9d9;"></div>
<div style="left:324px;top:467px;width:1px;height:66px;background:#d9d9d9;"></div>
<div style="left:412px;top:467px;width:1px;height:66px;background:#d9d9d9;"></div>
<div style="left:500px;top:467px;width:95px;height:67px;background:#d9d9d9;"></div>
<div class="t" style="left:66.90px;top:493.00px;font-size:13.08px;color:#262626;transform:scaleX(0.8978);">R$ 10.800</div>
<div class="t" style="left:165.15px;top:493.00px;font-size:13.08px;color:#262626;transform:scaleX(0.8909);">R$ 1.000</div>
<div class="t" style="left:256.85px;top:493.00px;font-size:13.08px;color:#262626;transform:scaleX(0.8909);">R$ 1.000</div>
<div class="t" style="left:353.15px;top:493.00px;font-size:13.08px;color:#262626;transform:scaleX(0.8795);">R$ 50</div>
<div class="t" style="left:445.35px;top:493.00px;font-size:13.08px;color:#262626;transform:scaleX(0.8432);">R$ 0</div>
<div class="t" style="left:519.15px;top:492.00px;font-size:14.53px;color:#404040;font-weight:bold;transform:scaleX(0.8453);">R$ 12.850</div>
<div class="t" style="left:58.70px;top:556.00px;font-size:15.41px;color:#000000;font-weight:bold;transform:scaleX(0.9159);">Despesas</div>
<div style="left:48px;top:583px;width:92px;height:43px;background:#d9d9d9;"></div>
<div style="left:143px;top:583px;width:92px;height:43px;background:#d9d9d9;"></div>
<div style="left:238px;top:583px;width:85px;height:43px;background:#d9d9d9;"></div>
<div style="left:326px;top:583px;width:85px;height:43px;background:#d9d9d9;"></div>
<div style="left:414px;top:583px;width:85px;height:43px;background:#d9d9d9;"></div>
<div style="left:502px;top:583px;width:91px;height:43px;background:#d9d9d9;"></div>
<div class="t" style="left:57.60px;top:598.00px;font-size:13.08px;color:#404040;font-weight:bold;transform:scaleX(0.8089);">Pessoal</div>
<div class="t" style="left:152.50px;top:598.00px;font-size:13.08px;color:#404040;font-weight:bold;transform:scaleX(0.8771);">Administrativa</div>
<div class="t" style="left:247.60px;top:598.00px;font-size:13.08px;color:#404040;font-weight:bold;transform:scaleX(0.8504);">Operacional</div>
<div class="t" style="left:335.30px;top:598.00px;font-size:13.08px;color:#404040;font-weight:bold;transform:scaleX(0.8283);">Financeira</div>
<div class="t" style="left:423.10px;top:589.00px;font-size:13.08px;color:#404040;font-weight:bold;transform:scaleX(0.8752);">Outras</div>
<div class="t" style="left:423.10px;top:607.00px;font-size:13.08px;color:#404040;font-weight:bold;transform:scaleX(0.8183);">despesas</div>
<div class="t" style="left:511.00px;top:598.00px;font-size:13.08px;color:#404040;font-weight:bold;transform:scaleX(0.8255);">SUB TOTAL (2)</div>
<div style="left:46px;top:629px;width:455px;height:67px;background:#f2f2f2;border-left:1px solid #d9d9d9;border-bottom:1px solid #d9d9d9;box-sizing:border-box;"></div>
<div style="left:141px;top:629px;width:1px;height:66px;background:#d9d9d9;"></div>
<div style="left:236px;top:629px;width:1px;height:66px;background:#d9d9d9;"></div>
<div style="left:324px;top:629px;width:1px;height:66px;background:#d9d9d9;"></div>
<div style="left:412px;top:629px;width:1px;height:66px;background:#d9d9d9;"></div>
<div style="left:500px;top:629px;width:95px;height:67px;background:#d9d9d9;"></div>
<div class="t" style="left:70.15px;top:655.00px;font-size:13.08px;color:#262626;transform:scaleX(0.8984);">R$ 7.000</div>
<div class="t" style="left:165.15px;top:655.00px;font-size:13.08px;color:#262626;transform:scaleX(0.8909);">R$ 1.500</div>
<div class="t" style="left:261.50px;top:655.00px;font-size:13.08px;color:#262626;transform:scaleX(0.9008);">R$ 500</div>
<div class="t" style="left:349.60px;top:655.00px;font-size:13.08px;color:#262626;transform:scaleX(0.8961);">R$ 300</div>
<div class="t" style="left:438.35px;top:655.00px;font-size:13.08px;color:#262626;transform:scaleX(0.8842);">R$ 300</div>
<div class="t" style="left:522.80px;top:654.00px;font-size:14.53px;color:#404040;font-weight:bold;transform:scaleX(0.8374);">R$ 9.600</div>
<div class="t" style="left:622.60px;top:394.00px;font-size:15.70px;color:#000000;font-weight:bold;transform:scaleX(0.9332);">Resultado Financeiro Mensal</div>
<div style="left:615px;top:421px;width:715px;height:115px;background:#ffffff;border:1px solid #d9d9d9;box-sizing:border-box;"></div>
<div style="left:627px;top:492px;width:587px;height:1px;background:#d9d9d9;"></div>
<svg style="position:absolute;left:0px;top:0px;pointer-events:none;" width="1366" height="768" viewBox="0 0 1366 768"><rect x="634.20" y="455.10" width="17.6" height="37.20" fill="#55a83c"/><rect x="651.80" y="464.40" width="18.2" height="27.90" fill="#f4462d"/><rect x="683.05" y="461.50" width="17.6" height="30.80" fill="#55a83c"/><rect x="700.65" y="459.30" width="18.2" height="33.00" fill="#f4462d"/><rect x="731.90" y="461.50" width="17.6" height="30.80" fill="#55a83c"/><rect x="749.50" y="458.20" width="18.2" height="34.10" fill="#f4462d"/><rect x="780.75" y="462.20" width="17.6" height="30.10" fill="#55a83c"/><rect x="798.35" y="466.10" width="18.2" height="26.20" fill="#f4462d"/><rect x="829.60" y="462.20" width="17.6" height="30.10" fill="#55a83c"/><rect x="847.20" y="466.10" width="18.2" height="26.20" fill="#f4462d"/><path d="M651.80 483.00 C659.94 484.84 684.37 492.04 700.65 494.02 C716.93 495.99 733.22 495.78 749.50 494.87 C765.78 493.97 782.07 489.54 798.35 488.58 C814.63 487.63 830.92 488.53 847.20 489.15 C863.48 489.77 879.77 491.78 896.05 492.30 C912.33 492.82 928.62 492.30 944.90 492.30 C961.18 492.30 977.47 492.30 993.75 492.30 C1010.03 492.30 1026.32 492.30 1042.60 492.30 C1058.88 492.30 1075.17 492.30 1091.45 492.30 C1107.73 492.30 1124.02 492.30 1140.30 492.30 C1156.58 492.30 1181.01 492.30 1189.15 492.30" fill="none" stroke="#404040" stroke-width="2.2"/></svg>
<div class="t" style="left:639.61px;top:463.00px;font-size:9.74px;color:#404040;">3.250</div>
<div class="t" style="left:690.90px;top:475.00px;font-size:9.74px;color:#404040;">-600</div>
<div class="t" style="left:739.75px;top:475.00px;font-size:9.74px;color:#404040;">-900</div>
<div class="t" style="left:786.16px;top:468.00px;font-size:9.74px;color:#404040;">1.300</div>
<div class="t" style="left:835.01px;top:468.00px;font-size:9.74px;color:#404040;">1.100</div>
<div class="t" style="left:893.34px;top:473.00px;font-size:9.74px;color:#404040;">0</div>
<div class="t" style="left:942.19px;top:473.00px;font-size:9.74px;color:#404040;">0</div>
<div class="t" style="left:991.04px;top:473.00px;font-size:9.74px;color:#404040;">0</div>
<div class="t" style="left:1039.89px;top:473.00px;font-size:9.74px;color:#404040;">0</div>
<div class="t" style="left:1088.74px;top:473.00px;font-size:9.74px;color:#404040;">0</div>
<div class="t" style="left:1137.59px;top:473.00px;font-size:9.74px;color:#404040;">0</div>
<div class="t" style="left:1186.44px;top:473.00px;font-size:9.74px;color:#404040;">0</div>
<div class="t" style="left:636.07px;top:501.00px;font-size:9.59px;color:#4a4a4a;">Janeiro</div>
<div class="t" style="left:680.39px;top:501.00px;font-size:9.59px;color:#4a4a4a;">Fevereiro</div>
<div class="t" style="left:736.17px;top:501.00px;font-size:9.59px;color:#4a4a4a;">Março</div>
<div class="t" style="left:788.75px;top:501.00px;font-size:9.59px;color:#4a4a4a;">Abril</div>
<div class="t" style="left:836.80px;top:501.00px;font-size:9.59px;color:#4a4a4a;">Maio</div>
<div class="t" style="left:882.98px;top:501.00px;font-size:9.59px;color:#4a4a4a;">Junho</div>
<div class="t" style="left:933.43px;top:501.00px;font-size:9.59px;color:#4a4a4a;">Julho</div>
<div class="t" style="left:978.82px;top:501.00px;font-size:9.59px;color:#4a4a4a;">Agosto</div>
<div class="t" style="left:1021.80px;top:501.00px;font-size:9.59px;color:#4a4a4a;">Setembro</div>
<div class="t" style="left:1074.12px;top:501.00px;font-size:9.59px;color:#4a4a4a;">Outubro</div>
<div class="t" style="left:1118.17px;top:501.00px;font-size:9.59px;color:#4a4a4a;">Novembro</div>
<div class="t" style="left:1167.02px;top:501.00px;font-size:9.59px;color:#4a4a4a;">Dezembro</div>
<div style="left:1233px;top:455px;width:23px;height:6px;background:#55a83c;"></div>
<div class="t" style="left:1258.50px;top:452.00px;font-size:9.88px;color:#4a4a4a;transform:scaleX(0.9232);">Receitas</div>
<div style="left:1233px;top:475px;width:23px;height:6px;background:#f4462d;"></div>
<div class="t" style="left:1258.50px;top:472.00px;font-size:9.88px;color:#4a4a4a;transform:scaleX(0.9169);">Despesas</div>
<div style="left:1232.5px;top:497px;width:24px;height:2px;background:#404040;"></div>
<div class="t" style="left:1258.50px;top:493.00px;font-size:9.88px;color:#4a4a4a;transform:scaleX(0.9663);">Saldo do Mês</div>
<div class="t" style="left:622.90px;top:556.00px;font-size:15.70px;color:#000000;font-weight:bold;transform:scaleX(0.9561);">Inadimplência Mensal - Valores em Aberto</div>
<div style="left:615px;top:580px;width:715px;height:115px;background:#ffffff;border:1px solid #d9d9d9;box-sizing:border-box;"></div>
<div style="left:627px;top:658px;width:690px;height:1px;background:#d9d9d9;"></div>
<svg style="position:absolute;left:0px;top:0px;pointer-events:none;" width="1366" height="768" viewBox="0 0 1366 768"><path d="M656.40 658.30 C665.96 650.98 694.65 621.72 713.78 614.40 C732.91 607.08 752.03 614.40 771.16 614.40 C790.29 614.40 809.41 614.40 828.54 614.40 C847.67 614.40 866.79 607.08 885.92 614.40 C905.05 621.72 924.17 650.98 943.30 658.30 C962.43 665.62 981.55 658.30 1000.68 658.30 C1019.81 658.30 1038.93 658.30 1058.06 658.30 C1077.19 658.30 1096.31 658.30 1115.44 658.30 C1134.57 658.30 1153.69 658.30 1172.82 658.30 C1191.95 658.30 1211.07 658.30 1230.20 658.30 C1249.33 658.30 1278.02 658.30 1287.58 658.30" fill="none" stroke="#f4462d" stroke-width="2.2"/></svg>
<div class="t" style="left:647.33px;top:639.00px;font-size:9.88px;color:#404040;">R$0</div>
<div class="t" style="left:696.03px;top:596.00px;font-size:9.60px;color:#404040;transform:scaleX(0.9781);">R$2.000</div>
<div class="t" style="left:753.41px;top:596.00px;font-size:9.60px;color:#404040;transform:scaleX(0.9781);">R$2.000</div>
<div class="t" style="left:810.79px;top:596.00px;font-size:9.60px;color:#404040;transform:scaleX(0.9781);">R$2.000</div>
<div class="t" style="left:868.17px;top:596.00px;font-size:9.60px;color:#404040;transform:scaleX(0.9781);">R$2.000</div>
<div class="t" style="left:934.23px;top:639.00px;font-size:9.88px;color:#404040;">R$0</div>
<div class="t" style="left:991.61px;top:639.00px;font-size:9.88px;color:#404040;">R$0</div>
<div class="t" style="left:1048.99px;top:639.00px;font-size:9.88px;color:#404040;">R$0</div>
<div class="t" style="left:1106.37px;top:639.00px;font-size:9.88px;color:#404040;">R$0</div>
<div class="t" style="left:1163.75px;top:639.00px;font-size:9.88px;color:#404040;">R$0</div>
<div class="t" style="left:1221.13px;top:639.00px;font-size:9.88px;color:#404040;">R$0</div>
<div class="t" style="left:1278.51px;top:639.00px;font-size:9.88px;color:#404040;">R$0</div>
<div class="t" style="left:640.67px;top:667.00px;font-size:9.59px;color:#4a4a4a;">Janeiro</div>
<div class="t" style="left:693.52px;top:667.00px;font-size:9.59px;color:#4a4a4a;">Fevereiro</div>
<div class="t" style="left:757.83px;top:667.00px;font-size:9.59px;color:#4a4a4a;">Março</div>
<div class="t" style="left:818.94px;top:667.00px;font-size:9.59px;color:#4a4a4a;">Abril</div>
<div class="t" style="left:875.52px;top:667.00px;font-size:9.59px;color:#4a4a4a;">Maio</div>
<div class="t" style="left:930.23px;top:667.00px;font-size:9.59px;color:#4a4a4a;">Junho</div>
<div class="t" style="left:989.21px;top:667.00px;font-size:9.59px;color:#4a4a4a;">Julho</div>
<div class="t" style="left:1043.13px;top:667.00px;font-size:9.59px;color:#4a4a4a;">Agosto</div>
<div class="t" style="left:1094.64px;top:667.00px;font-size:9.59px;color:#4a4a4a;">Setembro</div>
<div class="t" style="left:1155.49px;top:667.00px;font-size:9.59px;color:#4a4a4a;">Outubro</div>
<div class="t" style="left:1208.07px;top:667.00px;font-size:9.59px;color:#4a4a4a;">Novembro</div>
<div class="t" style="left:1265.45px;top:667.00px;font-size:9.59px;color:#4a4a4a;">Dezembro</div>
<div style="left:1348px;top:205px;width:15px;height:512px;background:#dadada;"></div>
<div style="left:1348px;top:205px;width:15px;height:15px;background:#ffffff;border:1px solid #ababab;box-sizing:border-box;"></div>
<svg style="position:absolute;left:1351px;top:209px;" width="9" height="6" viewBox="0 0 9 6"><path d="M0.5 5L4.5 0.8 8.5 5z" fill="#606060"/></svg>
<div style="left:1348px;top:220px;width:15px;height:304px;background:#ffffff;border:1px solid #ababab;box-sizing:border-box;"></div>
<div style="left:1348px;top:703px;width:15px;height:15px;background:#ffffff;border:1px solid #ababab;box-sizing:border-box;"></div>
<svg style="position:absolute;left:1351px;top:708px;" width="9" height="6" viewBox="0 0 9 6"><path d="M0.5 0.8L4.5 5 8.5 0.8z" fill="#606060"/></svg>
<div style="left:0px;top:718px;width:1366px;height:27px;background:#e6e6e6;"></div>
<div style="left:0px;top:717px;width:1366px;height:1px;background:#ababab;"></div>
<div style="left:0px;top:744px;width:1366px;height:1px;background:#c6c6c6;"></div>
<svg style="position:absolute;left:26px;top:727px;" width="6" height="8" viewBox="0 0 6 8"><path d="M5.5 0L0.5 4l5 4z" fill="#217346"/></svg>
<svg style="position:absolute;left:55.5px;top:727px;" width="6" height="8" viewBox="0 0 6 8"><path d="M0.5 0l5 4-5 4z" fill="#217346"/></svg>
<div style="left:81px;top:733px;width:2px;height:2px;background:#217346;"></div>
<div style="left:85.3px;top:733px;width:2px;height:2px;background:#217346;"></div>
<div style="left:89.6px;top:733px;width:2px;height:2px;background:#217346;"></div>
<div style="left:100px;top:721px;width:1px;height:20px;background:#b4b4b4;"></div>
<div style="left:215px;top:721px;width:1px;height:20px;background:#b4b4b4;"></div>
<div style="left:260px;top:721px;width:1px;height:20px;background:#b4b4b4;"></div>
<div style="left:304px;top:721px;width:1px;height:20px;background:#b4b4b4;"></div>
<div style="left:352px;top:721px;width:1px;height:20px;background:#b4b4b4;"></div>
<div style="left:398px;top:721px;width:1px;height:20px;background:#b4b4b4;"></div>
<div style="left:446px;top:721px;width:1px;height:20px;background:#b4b4b4;"></div>
<div style="left:492px;top:721px;width:1px;height:20px;background:#b4b4b4;"></div>
<div style="left:534px;top:721px;width:1px;height:20px;background:#b4b4b4;"></div>
<div style="left:583px;top:721px;width:1px;height:20px;background:#b4b4b4;"></div>
<div style="left:625px;top:721px;width:1px;height:20px;background:#b4b4b4;"></div>
<div style="left:673px;top:721px;width:1px;height:20px;background:#b4b4b4;"></div>
<div style="left:722px;top:721px;width:1px;height:20px;background:#b4b4b4;"></div>
<div style="left:769px;top:721px;width:1px;height:20px;background:#b4b4b4;"></div>
<div style="left:881px;top:721px;width:1px;height:20px;background:#b4b4b4;"></div>
<div class="t" style="left:113.60px;top:723.00px;font-size:14.39px;color:#444444;transform:scaleX(0.8916);">Cad Impressão</div>
<div class="t" style="left:227.20px;top:723.00px;font-size:14.39px;color:#444444;transform:scaleX(0.8103);">Jan</div>
<div class="t" style="left:272.30px;top:723.00px;font-size:14.39px;color:#444444;transform:scaleX(0.7962);">Fev</div>
<div class="t" style="left:316.30px;top:723.00px;font-size:14.39px;color:#444444;transform:scaleX(0.9442);">Mar</div>
<div class="t" style="left:364.00px;top:723.00px;font-size:14.39px;color:#444444;transform:scaleX(0.9378);">Abr</div>
<div class="t" style="left:409.90px;top:723.00px;font-size:14.39px;color:#444444;transform:scaleX(0.9747);">Mai</div>
<div class="t" style="left:458.20px;top:723.00px;font-size:14.39px;color:#444444;transform:scaleX(0.8103);">Jun</div>
<div class="t" style="left:504.20px;top:723.00px;font-size:14.39px;color:#444444;transform:scaleX(0.7937);">Jul</div>
<div class="t" style="left:545.20px;top:723.00px;font-size:14.39px;color:#444444;transform:scaleX(0.9139);">Ago</div>
<div class="t" style="left:594.00px;top:723.00px;font-size:14.39px;color:#444444;transform:scaleX(0.8195);">Set</div>
<div class="t" style="left:638.30px;top:723.00px;font-size:14.39px;color:#444444;transform:scaleX(0.9098);">Out</div>
<div class="t" style="left:684.30px;top:723.00px;font-size:14.39px;color:#444444;transform:scaleX(0.9379);">Nov</div>
<div class="t" style="left:733.20px;top:723.00px;font-size:14.39px;color:#444444;transform:scaleX(0.8480);">Dez</div>
<div class="t" style="left:783.40px;top:723.00px;font-size:14.39px;color:#444444;transform:scaleX(0.8996);">Inadimplentes</div>
<div class="t" style="left:894.10px;top:723.00px;font-size:14.39px;color:#444444;transform:scaleX(0.8468);">Balancete</div>
<div class="t" style="left:1081.20px;top:723.00px;font-size:14.39px;color:#444444;transform:scaleX(0.8276);">Dash_Asso</div>
<div style="left:964px;top:717px;width:104px;height:25px;background:#ffffff;"></div>
<div style="left:1067px;top:717px;width:1px;height:25px;background:#ababab;"></div>
<div style="left:963px;top:717px;width:1px;height:25px;background:#ababab;"></div>
<div style="left:964px;top:740px;width:104px;height:2px;background:#217346;"></div>
<div class="t" style="left:976.10px;top:723.00px;font-size:14.39px;color:#217346;font-weight:bold;transform:scaleX(0.8502);">Dash_Mensal</div>
<div style="left:1151px;top:733px;width:2px;height:2px;background:#217346;"></div>
<div style="left:1155.3px;top:733px;width:2px;height:2px;background:#217346;"></div>
<div style="left:1159.6px;top:733px;width:2px;height:2px;background:#217346;"></div>
<svg style="position:absolute;left:1175px;top:723px;" width="17" height="17" viewBox="0 0 17 17"><circle cx="8.3" cy="7.8" r="7.2" fill="none" stroke="#6a6a6a" stroke-width="1.2"/><path d="M8.3 3.8v8M4.3 7.8h8" stroke="#6a6a6a" stroke-width="1.6"/></svg>
<div style="left:1211px;top:725px;width:2px;height:2px;background:#a6a6a6;"></div>
<div style="left:1211px;top:730px;width:2px;height:2px;background:#a6a6a6;"></div>
<div style="left:1211px;top:735px;width:2px;height:2px;background:#a6a6a6;"></div>
<div style="left:1229px;top:724px;width:117px;height:15px;background:#dadada;"></div>
<div style="left:1229px;top:724px;width:14px;height:15px;background:#ffffff;border:1px solid #ababab;box-sizing:border-box;"></div>
<svg style="position:absolute;left:1233px;top:728px;" width="5" height="8" viewBox="0 0 5 8"><path d="M4.5 0.5v7l-4-3.5z" fill="#606060"/></svg>
<div style="left:1243px;top:724px;width:58px;height:15px;background:#ffffff;border:1px solid #ababab;box-sizing:border-box;"></div>
<div style="left:1332px;top:724px;width:15px;height:15px;background:#ffffff;border:1px solid #ababab;box-sizing:border-box;"></div>
<svg style="position:absolute;left:1337px;top:728px;" width="5" height="8" viewBox="0 0 5 8"><path d="M0.5 0.5v7l4-3.5z" fill="#606060"/></svg>
<div style="left:0px;top:745px;width:1366px;height:21px;background:#f3f3f3;"></div>
<div class="t" style="left:7.30px;top:750.00px;font-size:12.00px;color:#333333;transform:scaleX(0.9645);">Pronto</div>
<svg style="position:absolute;left:62px;top:749px;" width="14" height="13" viewBox="0 0 14 13"><circle cx="3" cy="3" r="2.6" fill="#6a6a6a"/><path d="M5.5 1.5h8v11h-12v-6" fill="none" stroke="#6a6a6a" stroke-width="1"/><path d="M5.5 2h8v2h-8z" fill="#6a6a6a"/><path d="M4 7h1.3M6.5 7h1.3M9 7h1.3M11.5 7h1.3M4 9.5h1.3M6.5 9.5h1.3M9 9.5h1.3M11.5 9.5h1.3M4 11.5h1.3M6.5 11.5h1.3M9 11.5h1.3M11.5 11.5h1.3" stroke="#6a6a6a" stroke-width="1.3"/></svg>
<div style="left:1086px;top:745px;width:38px;height:21px;background:#c8c8c8;"></div>
<svg style="position:absolute;left:1098px;top:749px;" width="14" height="13" viewBox="0 0 14 13"><rect x="0.5" y="0.5" width="13" height="12" fill="none" stroke="#6a6a6a"/><path d="M4.8 0.5v12M9.2 0.5v12M0.5 4.5h13M0.5 8.5h13" stroke="#6a6a6a"/></svg>
<svg style="position:absolute;left:1136px;top:749px;" width="14" height="13" viewBox="0 0 14 13"><rect x="0.5" y="0.5" width="13" height="12" fill="none" stroke="#6a6a6a"/><rect x="3.5" y="2.5" width="7" height="8" fill="none" stroke="#6a6a6a"/><path d="M5 4.5h4M5 6.5h4M5 8.5h4" stroke="#6a6a6a" stroke-width="1"/></svg>
<svg style="position:absolute;left:1174px;top:749px;" width="15" height="13" viewBox="0 0 15 13"><rect x="0.5" y="0.5" width="14" height="12" fill="none" stroke="#6a6a6a"/><path d="M7.5 0.5v5H0.5M10.5 0.5v4" fill="none" stroke="#6a6a6a"/></svg>
<div style="left:1205px;top:755px;width:6px;height:2px;background:#555555;"></div>
<div style="left:1215px;top:756px;width:100px;height:1px;background:#b4b4b4;"></div>
<div style="left:1265px;top:753px;width:1px;height:6px;background:#a0a0a0;"></div>
<div style="left:1258px;top:750px;width:5px;height:11px;background:#6a6a6a;"></div>
<div style="left:1318px;top:755px;width:8px;height:2px;background:#555555;"></div>
<div style="left:1321px;top:752px;width:2px;height:8px;background:#555555;"></div>
<div class="t" style="left:1337.30px;top:750.00px;font-size:12.00px;color:#333333;transform:scaleX(0.8410);">90%</div>
<div style="left:0px;top:766px;width:1366px;height:2px;background:#1a1a1a;"></div>
<div style="left:48px;top:766px;width:344px;height:2px;background:#c8c8c8;"></div>
<div style="left:542px;top:766px;width:48px;height:2px;background:#5a5a5a;"></div>
</body></html>
